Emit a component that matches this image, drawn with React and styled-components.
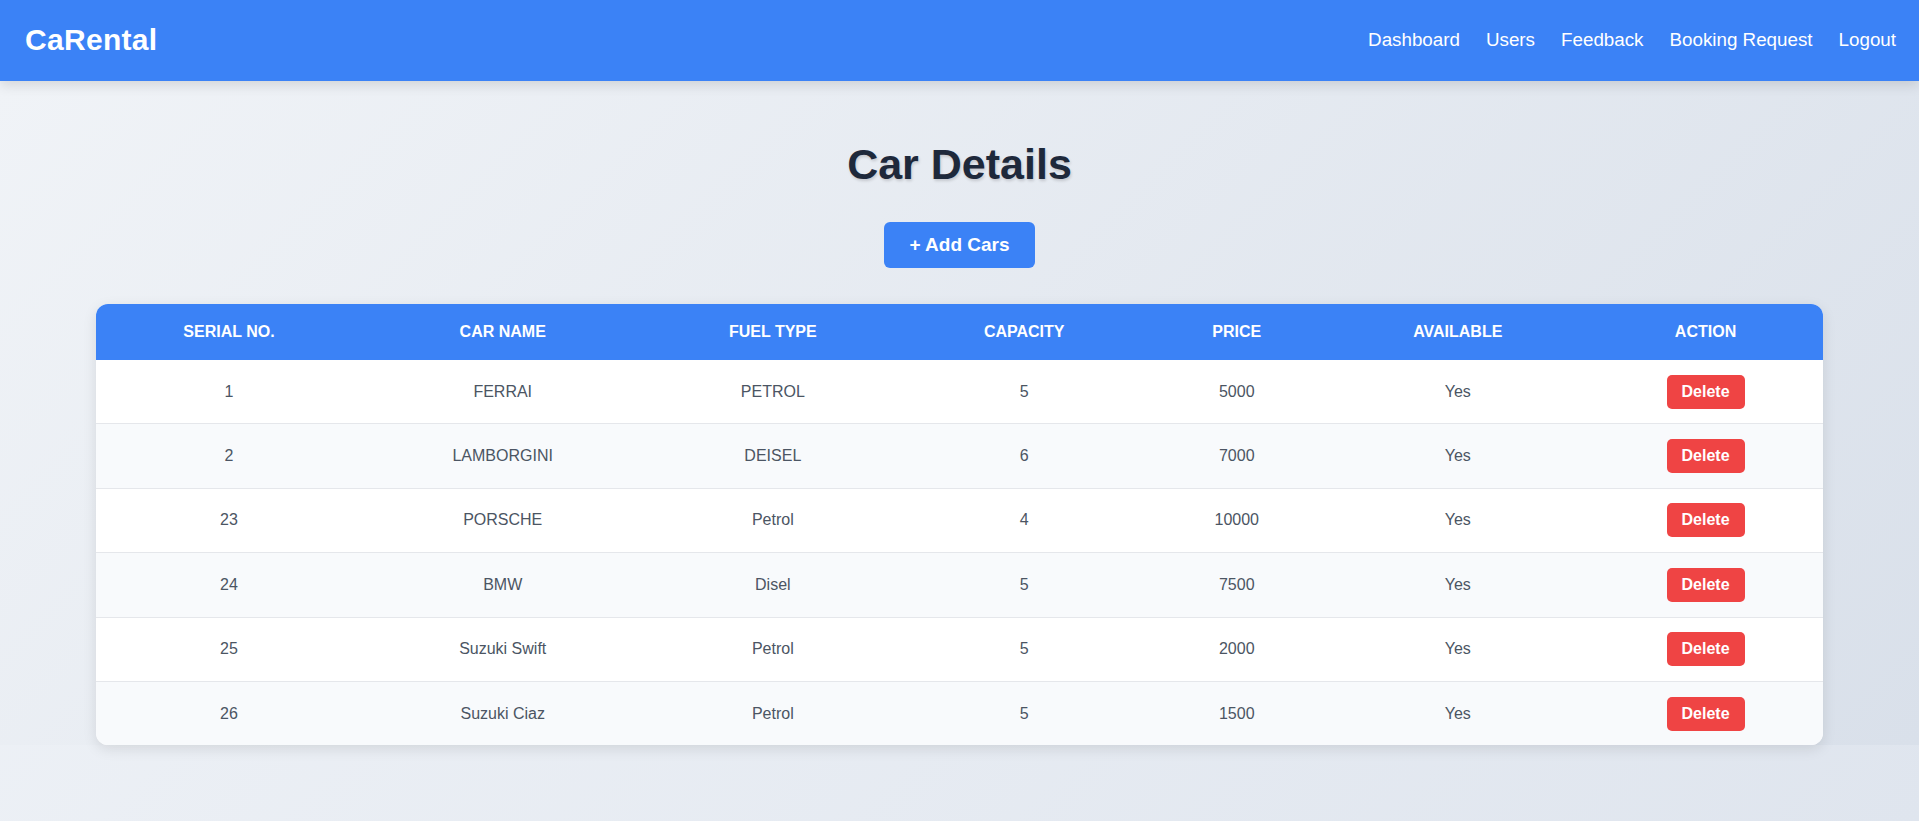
import styled, { createGlobalStyle } from 'styled-components';

const cars = [
    { id: 1, name: 'FERRAI', fuel: 'PETROL', capacity: 5, price: 5000, available: 'Yes' },
    { id: 2, name: 'LAMBORGINI', fuel: 'DEISEL', capacity: 6, price: 7000, available: 'Yes' },
    { id: 23, name: 'PORSCHE', fuel: 'Petrol', capacity: 4, price: 10000, available: 'Yes' },
    { id: 24, name: 'BMW', fuel: 'Disel', capacity: 5, price: 7500, available: 'Yes' },
    { id: 25, name: 'Suzuki Swift', fuel: 'Petrol', capacity: 5, price: 2000, available: 'Yes' },
    { id: 26, name: 'Suzuki Ciaz', fuel: 'Petrol', capacity: 5, price: 1500, available: 'Yes' },
];

const columns = [
    { label: 'Serial No.', width: '15.5%' },
    { label: 'Car Name', width: '16.45%' },
    { label: 'Fuel Type', width: '15.05%' },
    { label: 'Capacity', width: '14.1%' },
    { label: 'Price', width: '10.2%' },
    { label: 'Available', width: '15.15%' },
    { label: 'Action', width: '13.55%' },
];

const navLinks = ['Dashboard', 'Users', 'Feedback', 'Booking Request', 'Logout'];

export default function App() {
    return (
        <>
            <GlobalStyle />
            <Navbar>
                <Logo>CaRental</Logo>
                <NavLinks>
                    {navLinks.map(link => (
                        <NavLink key={link} href="#">{link}</NavLink>
                    ))}
                </NavLinks>
            </Navbar>
            <Main>
                <Title>Car Details</Title>
                <AddButton type="button">+ Add Cars</AddButton>
                <TableCard>
                    <Table>
                        <thead>
                            <tr>
                                {columns.map(col => (
                                    <Th key={col.label} $w={col.width}>{col.label}</Th>
                                ))}
                            </tr>
                        </thead>
                        <tbody>
                            {cars.map(car => (
                                <Row key={car.id}>
                                    <Td>{car.id}</Td>
                                    <Td>{car.name}</Td>
                                    <Td>{car.fuel}</Td>
                                    <Td>{car.capacity}</Td>
                                    <Td>{car.price}</Td>
                                    <Td>{car.available}</Td>
                                    <Td><DeleteButton type="button">Delete</DeleteButton></Td>
                                </Row>
                            ))}
                        </tbody>
                    </Table>
                </TableCard>
            </Main>
        </>
    );
}

const GlobalStyle = createGlobalStyle`
html, body {
    margin: 0;
    min-height: 100%;
}
body {
    font-family: "Liberation Sans", Arial, sans-serif;
    background: linear-gradient(135deg, #f1f4f8 0%, #dfe5ee 100%);
    min-height: 100vh;
}
`

const Navbar = styled.nav`
display: flex;
align-items: center;
justify-content: space-between;
height: 81px;
padding: 0 23px 0 25px;
background-color: #3b82f6;
box-shadow: 0 4px 12px rgba(0, 0, 0, 0.12);
position: relative;
z-index: 1;
`

const Logo = styled.div`
color: white;
font-size: 30px;
font-weight: 700;
letter-spacing: 0.3px;
margin-top: -2px;
`

const NavLinks = styled.div`
display: flex;
gap: 26px;
margin-top: -2px;
`

const NavLink = styled.a`
color: white;
text-decoration: none;
font-size: 18.8px;
`

const Main = styled.main`
display: flex;
flex-direction: column;
align-items: center;
padding-top: 59px;
background: linear-gradient(135deg, #f0f3f7 0%, #d9e0ea 100%);
`

const Title = styled.h1`
margin: 0;
font-size: 43px;
font-weight: 700;
color: #1e293b;
text-shadow: 1px 2px 3px rgba(0, 0, 0, 0.15);
`

const AddButton = styled.button`
margin-top: 33px;
padding: 12px 25px;
border: none;
border-radius: 6px;
background-color: #3b82f6;
color: white;
font-family: inherit;
font-size: 19px;
font-weight: 700;
cursor: pointer;
`

const TableCard = styled.div`
width: 90%;
margin-top: 36px;
border-radius: 12px;
overflow: hidden;
background: white;
box-shadow: 0 4px 14px rgba(0, 0, 0, 0.1);
`

const Table = styled.table`
width: 100%;
border-collapse: collapse;
table-layout: fixed;
`

const Th = styled.th`
width: ${p => p.$w};
height: 56px;
padding: 0 10px;
background-color: #3b82f6;
color: white;
font-size: 16px;
font-weight: 700;
text-transform: uppercase;
text-align: center;
`

const Row = styled.tr`
background-color: white;
border-bottom: 1px solid #e5e7eb;
&:nth-child(even) {
    background-color: #f8fafc;
}
&:last-child {
    border-bottom: none;
}
`

const Td = styled.td`
height: 63.4px;
padding: 0 10px;
text-align: center;
color: #4b5563;
font-size: 16px;
`

const DeleteButton = styled.button`
padding: 8px 15px;
border: none;
border-radius: 5px;
background-color: #ef4444;
color: white;
font-family: inherit;
font-size: 16px;
font-weight: 700;
cursor: pointer;
`
